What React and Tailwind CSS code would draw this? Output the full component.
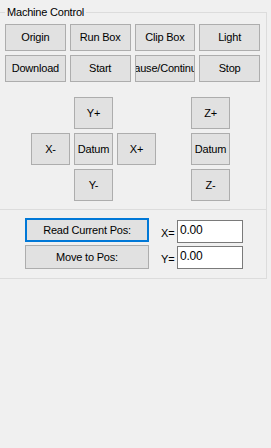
import React from "react";

function Btn({ children, className = "", focused = false }) {
  return (
    <div
      className={`flex items-center justify-center overflow-hidden whitespace-nowrap bg-[#e1e1e1] ${
        focused ? "border-2 border-[#0078d7]" : "border border-[#adadad]"
      } ${className}`}
    >
      {children}
    </div>
  );
}

export default function App() {
  return (
    <div className="w-[271px] h-[448px] bg-[#f0f0f0] text-black text-[11px] tracking-[-0.2px] font-['Liberation_Sans',Arial,sans-serif]">
      <div className="pt-[12px]">
        <div className="w-[267px] h-[267px] border-r border-b border-[#dcdcdc]">
          {/* Machine Control group */}
          <div className="h-[198px] border-t border-b border-[#dcdcdc]">
            <div className="-mt-[7px] ml-[5px] px-[2px] w-fit bg-[#f0f0f0] leading-[13px]">
              Machine Control
            </div>

            <div className="mt-[5px] ml-[5px] w-[255px] grid grid-cols-4 gap-x-[4px] gap-y-[4px]">
              <Btn className="h-[27px]">Origin</Btn>
              <Btn className="h-[27px]">Run Box</Btn>
              <Btn className="h-[27px]">Clip Box</Btn>
              <Btn className="h-[27px]">Light</Btn>
              <Btn className="h-[27px]">Download</Btn>
              <Btn className="h-[27px]">Start</Btn>
              <Btn className="h-[27px]">Pause/Continue</Btn>
              <Btn className="h-[27px]">Stop</Btn>
            </div>

            {/* jog */}
            <div className="mt-[15px] pl-[31px] flex">
              <div className="grid grid-cols-[39px_39px_39px] grid-rows-[32px_32px_32px] gap-[4px]">
                <div />
                <Btn>Y+</Btn>
                <div />
                <Btn>X-</Btn>
                <Btn>Datum</Btn>
                <Btn>X+</Btn>
                <div />
                <Btn>Y-</Btn>
                <div />
              </div>
              <div className="ml-[35px] flex flex-col gap-[4px]">
                <Btn className="w-[39px] h-[32px]">Z+</Btn>
                <Btn className="w-[39px] h-[32px]">Datum</Btn>
                <Btn className="w-[39px] h-[32px]">Z-</Btn>
              </div>
            </div>
          </div>

          {/* position */}
          <div className="pt-[8px] pl-[25px] flex">
            <div className="w-[124px] flex flex-col gap-[3px]">
              <Btn focused className="h-[24px]">Read Current Pos:</Btn>
              <Btn className="h-[24px]">Move to Pos:</Btn>
            </div>
            <div className="ml-[12px] mt-[2px] flex flex-col gap-[3px]">
              <div className="flex items-center h-[23px]">
                <span className="w-[16px] mt-[4px]">X=</span>
                <div className="w-[66px] h-[23px] bg-white border border-[#7a7a7a] pl-[2px] pt-[2px] text-[12px] leading-[14px]">
                  0.00
                </div>
              </div>
              <div className="flex items-center h-[23px]">
                <span className="w-[16px] mt-[4px]">Y=</span>
                <div className="w-[66px] h-[23px] bg-white border border-[#7a7a7a] pl-[2px] pt-[2px] text-[12px] leading-[14px]">
                  0.00
                </div>
              </div>
            </div>
          </div>
        </div>
      </div>
    </div>
  );
}
